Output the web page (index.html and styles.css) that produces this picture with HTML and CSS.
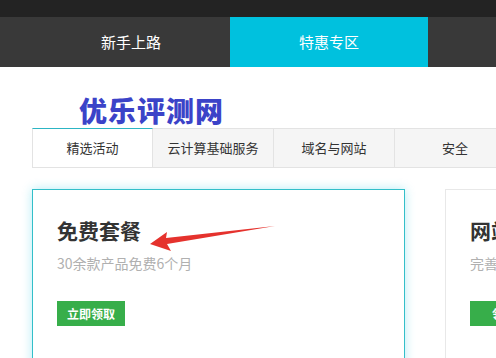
FILE: index.html
```html
<!DOCTYPE html>
<html lang="zh-CN">

<head>
  <meta charset="UTF-8" />
  <title>特惠专区</title>
  <link rel="stylesheet" href="styles.css">
</head>

<body>
  <div class="topbar"></div>
  <!-- 主导航 -->
  <div class="nav">
    <a href="javaScript:;">新手上路</a>
    <a href="javaScript:;" class="on">特惠专区</a>
  </div>

  <div class="logo">优乐评测网</div>

  <!-- 分类标签 -->
  <ul class="tabs">
    <li class="active">精选活动</li>
    <li>云计算基础服务</li>
    <li>域名与网站</li>
    <li>安全</li>
  </ul>

  <div class="cards">
    <div class="card hot">
      <h3>免费套餐</h3>
      <p>30余款产品免费6个月</p>
      <a href="javaScript:;" class="btn">立即领取</a>
      <!-- 红色箭头 -->
      <svg class="arrow" width="130" height="26" viewBox="0 0 130 26">
        <polygon points="0,18 17,6 16,12 125,0 17,18 21,25" fill="#e5322d" />
      </svg>
    </div>
    <div class="card">
      <h3>网站建设</h3>
      <p>完善的建站服务</p>
      <a href="javaScript:;" class="btn">领取</a>
    </div>
  </div>
</body>

</html>
```
FILE: styles.css
```css
* {
  margin: 0;
  padding: 0;
  box-sizing: border-box;
}

li,
ul {
  list-style: none;
}

a {
  text-decoration: none;
}

body {
  width: 496px;
  overflow: hidden;
  font-family: "Noto Sans CJK SC", "Noto Sans", sans-serif;
  background: #fff;
}

.topbar {
  height: 17px;
  background-color: #232323;
}

.nav {
  display: flex;
  height: 50px;
  padding-left: 32px;
  background-color: #393939;
}

.nav a {
  flex: 0 0 198px;
  line-height: 50px;
  text-align: center;
  font-size: 15px;
  color: #fff;
}

.nav .on {
  background-color: #00c1de;
}

.logo {
  height: 61px;
  padding: 26px 0 0 79px;
  font-size: 28px;
  font-weight: 900;
  line-height: 34px;
  color: #3b43c8;
  letter-spacing: 1px;
}

.tabs {
  display: flex;
  margin-left: 32px;
  border-bottom: 1px solid #e3e3e3;
}

.tabs li {
  flex: 0 0 121px;
  height: 39px;
  line-height: 37px;
  text-align: center;
  font-size: 13px;
  color: #333;
  background-color: #f5f5f5;
  border-top: 1px solid #e3e3e3;
  border-right: 1px solid #e3e3e3;
}

.tabs .active {
  background-color: #fff;
  border-top-color: #2cb5c4;
  border-left: 1px solid #e3e3e3;
}

.cards {
  display: flex;
  gap: 40px;
  padding: 21px 0 0 32px;
}

.card {
  position: relative;
  flex: 0 0 373px;
  height: 180px;
  padding: 24px 24px 0;
  border: 1px solid #e8e8e8;
}

.card.hot {
  border-color: #33bfc9;
  box-shadow: 0 0 10px rgba(0, 193, 222, 0.3);
}

.card h3 {
  font-size: 21px;
  line-height: 32px;
  color: #333;
}

.card p {
  margin-top: 6px;
  font-size: 14px;
  line-height: 22px;
  color: #b0b0b0;
}

.btn {
  display: inline-block;
  margin-top: 27px;
  width: 68px;
  height: 25px;
  line-height: 25px;
  text-align: center;
  font-size: 12px;
  font-weight: bold;
  color: #fff;
  background-color: #37ae4a;
}

.arrow {
  position: absolute;
  left: 117px;
  top: 36px;
}
```
